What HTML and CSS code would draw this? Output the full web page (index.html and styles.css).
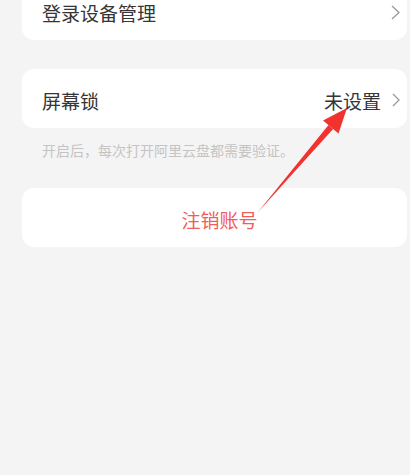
FILE: index.html
```html
<!DOCTYPE html>
<html lang="zh-CN">
<head>
    <meta charset="UTF-8">
    <meta name="viewport" content="width=device-width, initial-scale=1.0">
    <title>账号与安全</title>
    <link rel="stylesheet" href="styles.css">
</head>
<body>
    <div class="page">
        <div class="card">
            <span class="label">登录设备管理</span>
            <svg class="chevron" width="9" height="15" viewBox="0 0 9 15"><polyline points="1,1 8,7.5 1,14"/></svg>
        </div>

        <div class="card card-lock">
            <span class="label">屏幕锁</span>
            <span class="value">未设置</span>
            <svg class="chevron" width="8" height="14" viewBox="0 0 8 14"><polyline points="1,1 7,7 1,13"/></svg>
        </div>
        <p class="hint">开启后，每次打开阿里云盘都需要验证。</p>

        <div class="card card-danger">
            <span class="danger">注销账号</span>
        </div>
    </div>

    <!-- 标注箭头 -->
    <svg class="mark" width="410" height="475" viewBox="0 0 410 475">
        <polygon points="257.6,212.4 258.4,211.6 328.5,125 333.1,129" />
        <polygon points="347,108 323,120.5 338.5,133.5" />
    </svg>
</body>
</html>
```

FILE: styles.css
```css
* {
    box-sizing: border-box;
    margin: 0;
    padding: 0;
}

html, body {
    height: 100%;
}

body {
    font-family: "Noto Sans CJK SC", "Noto Sans", sans-serif;
    background-color: #f4f4f4;
    overflow: hidden;
    position: relative;
}

.page {
    margin-top: -19px;
    padding: 0 3px 0 22px;
}

.card {
    display: flex;
    align-items: center;
    height: 59px;
    padding: 3px 7px 0 20px;
    background: #fff;
    border-radius: 12px;
}

.card-lock {
    margin-top: 29px;
}

.label {
    flex: 1;
    font-size: 19px;
    color: #353535;
}

.value {
    font-size: 19px;
    color: #353535;
    margin-right: 11px;
}

.chevron {
    fill: none;
    stroke: #9a9a9a;
    stroke-width: 1.3;
}

.hint {
    margin-top: 12px;
    padding-left: 20px;
    font-size: 14px;
    line-height: 20px;
    color: #c4c4c4;
}

.card-danger {
    margin-top: 28px;
    justify-content: center;
    padding: 3px 9px 0 19px;
}

.danger {
    font-size: 19px;
    color: #ef5e5b;
}

.mark {
    position: absolute;
    top: 0;
    left: 0;
    fill: #f2322e;
}
```
